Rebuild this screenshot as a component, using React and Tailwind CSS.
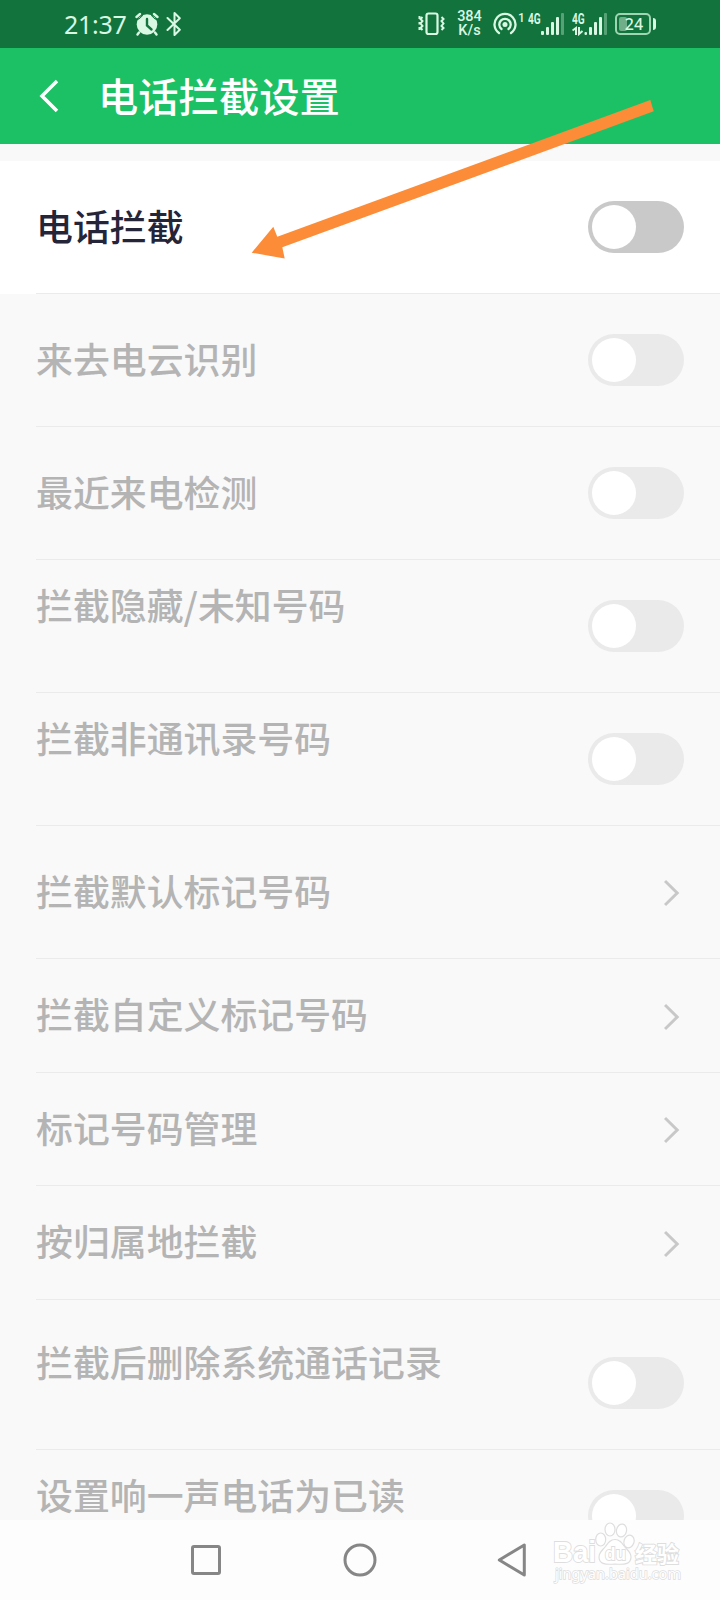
import React from 'react';

const rows = [
  { label: '电话拦截', type: 'switch', active: true, height: 'h-[133px]', align: 'items-center pb-[4px]' },
  { label: '来去电云识别', type: 'switch', height: 'h-[133px]', align: 'items-center pb-[5px]' },
  { label: '最近来电检测', type: 'switch', height: 'h-[133px]', align: 'items-center pb-[5px]' },
  { label: '拦截隐藏/未知号码', type: 'switch', height: 'h-[133px]', align: 'items-start pt-[18px]' },
  { label: '拦截非通讯录号码', type: 'switch', height: 'h-[133px]', align: 'items-start pt-[18px]' },
  { label: '拦截默认标记号码', type: 'link', height: 'h-[133px]', align: 'items-center pb-[5px]' },
  { label: '拦截自定义标记号码', type: 'link', height: 'h-[114px]', align: 'items-center pb-[5px]' },
  { label: '标记号码管理', type: 'link', height: 'h-[113px]', align: 'items-center pb-[5px]' },
  { label: '按归属地拦截', type: 'link', height: 'h-[114px]', align: 'items-center pb-[5px]' },
  { label: '拦截后删除系统通话记录', type: 'switch', height: 'h-[150px] pt-[17px]', align: 'items-start pt-[18px]' },
  { label: '设置响一声电话为已读', type: 'switch', height: 'h-[133px]', align: 'items-start pt-[18px]' },
];

function StatusBar() {
  return (
    <div className="h-12 shrink-0 bg-[#12743c] flex items-center pl-[64px] pr-[64px] text-[#d9f7e3]">
      <span className="w-[64px] font-['Noto_Sans'] text-[25px] leading-none tracking-[-0.3px] whitespace-nowrap">21:37</span>
      {/* Alarm */}
      <svg className="w-6 h-6 ml-[7px]" viewBox="0 0 24 24" fill="none">
        <circle cx="12" cy="12.5" r="10.3" fill="currentColor" />
        <path d="M1.5 5 5 2M22.5 5 19 2M4 20.5 2.5 22.5M20 20.5 21.5 22.5" stroke="currentColor" strokeWidth="2.4" strokeLinecap="round" />
        <path d="M3.5 7.5 8 3.2M20.5 7.5 16 3.2" stroke="#12743c" strokeWidth="1" />
        <path d="M12 7v6.5l4.5 4" stroke="#12743c" strokeWidth="2.4" strokeLinecap="round" />
      </svg>
      {/* Bluetooth */}
      <svg className="w-4 h-6 ml-[7px]" viewBox="0 0 16 24" fill="none" stroke="currentColor" strokeWidth="2" strokeLinejoin="round" strokeLinecap="round">
        <path d="M1.5 6 13.8 17.800 8.5 23V1l5.300 5.200L1.5 18" />
      </svg>

      <div className="ml-auto flex items-center">
        {/* Vibrate */}
        <svg className="w-[28px] h-[24px]" viewBox="0 0 28 24" fill="none" stroke="currentColor">
          <rect x="8.5" y="1.5" width="11" height="20.5" rx="2" strokeWidth="2.2" />
          <path d="M4.5 5 2.5 7 4.5 9 2.5 11.5 4.5 14 2.5 16 4.5 18M1.5 4v3M1.5 10v2.5M1.5 15v3M23.5 5l2 2-2 2 2 2.5-2 2.5 2 2-2 2" strokeWidth="2" />
        </svg>
        <div className="ml-[9px] w-[29px] text-center font-['Roboto'] font-medium text-[14.5px] leading-[14px]">
          <div>384</div>
          <div>K/s</div>
        </div>
        {/* Hotspot */}
        <svg className="ml-[8px] w-[26px] h-[24px]" viewBox="0 0 26 24" fill="none" stroke="currentColor" strokeWidth="2.3" strokeLinecap="round">
          <circle cx="13" cy="12.5" r="2.5" fill="currentColor" stroke="none" />
          <path d="M7 21a10.5 10.5 0 1 1 12 0M9.5 17a5.7 5.7 0 1 1 7 0" />
        </svg>
        <div className="flex h-[24px] w-[23px] items-start gap-[3px] font-['Roboto'] font-medium leading-none">
          <span className="text-[12px]">1</span>
          <span className="w-[12px] text-[14px] font-bold origin-left scale-x-[0.72]">4G</span>
        </div>
        <svg className="w-[24px] h-[24px]" viewBox="0 0 24 24" fill="currentColor">
          <rect x="0" y="19" width="3" height="4" rx="1" />
          <rect x="5" y="15" width="3" height="8" rx="1" />
          <rect x="10" y="10" width="3" height="13" rx="1" />
          <rect x="15" y="5" width="3" height="18" rx="1" />
          <rect x="20" y="1" width="3" height="22" rx="1" opacity=".35" />
        </svg>
        <div className="ml-[7px] w-[12px] h-[24px] flex flex-col justify-between font-['Roboto'] font-bold leading-none">
          <span className="text-[14px] origin-left scale-x-[0.72]">4G</span>
          <svg className="w-[12px] h-[10px]" viewBox="0 0 12 10" fill="none" stroke="currentColor" strokeWidth="2">
            <path d="M.5 4.5 4 2V9M7 1v7L10.5 5" />
          </svg>
        </div>
        <svg className="w-[24px] h-[24px]" viewBox="0 0 24 24" fill="currentColor">
          <rect x="0.5" y="20" width="2.5" height="3" rx="1" />
          <rect x="5" y="15" width="3" height="8" rx="1" />
          <rect x="10" y="10" width="3" height="13" rx="1" />
          <rect x="15" y="5" width="3" height="18" rx="1" />
          <rect x="20" y="1" width="3" height="22" rx="1" opacity=".35" />
        </svg>
        {/* Battery */}
        <div className="ml-[7px] flex items-center">
          <div className="relative w-[36px] h-[22px] rounded-[5px] border-2 border-[#9fd5b3] flex items-center justify-center">
            <div className="absolute left-[2px] top-[2px] w-[8px] h-[14px] rounded-[2px] bg-[#6fae88]" />
            <span className="relative pl-[2px] font-['Noto_Sans'] font-medium text-[16px] leading-none">24</span>
          </div>
          <div className="ml-[2px] w-[3px] h-[12px] rounded-r bg-[#d9f7e3]" />
        </div>
      </div>
    </div>
  );
}

function Switch({ active }) {
  return (
    <div className={`w-24 h-[52px] rounded-full p-1 shrink-0 ${active ? 'bg-[#c9c9c9]' : 'bg-[#eaeaea]'}`}>
      <div className="w-11 h-11 rounded-full bg-white" />
    </div>
  );
}

function SettingRow({ row }) {
  return (
    <div className={`shrink-0 pl-9 ${row.height} ${row.active ? 'bg-white' : ''}`}>
      <div className="h-full flex border-b border-[#ebebeb] pr-9">
        <div className={`flex-1 flex ${row.align}`}>
          <span className={`text-[36.9px] leading-[52px] font-medium whitespace-nowrap ${row.active ? 'text-[#25253a]' : 'text-[#b4b4b4]'}`}>
            {row.label}
          </span>
        </div>
        <div className="flex items-center">
          {row.type === 'switch' ? (
            <Switch active={row.active} />
          ) : (
            <svg className="w-[20px] h-[28px] mt-[2px]" viewBox="0 0 20 28" fill="none" stroke="#c8c8c8" strokeWidth="3">
              <path d="M1 2 13.2 14 1 26" />
            </svg>
          )}
        </div>
      </div>
    </div>
  );
}

function NavBar() {
  return (
    <div className="h-20 shrink-0 bg-[#fdfdfd] flex items-center pl-[190px]">
      <svg className="w-8 h-8" viewBox="0 0 32 32" fill="none" stroke="#868686" strokeWidth="3">
        <rect x="2.5" y="2.5" width="27" height="27" rx="1.5" />
      </svg>
      <svg className="w-[34px] h-[34px] ml-[121px]" viewBox="0 0 34 34" fill="none" stroke="#868686" strokeWidth="3">
        <circle cx="17" cy="17" r="15" />
      </svg>
      <svg className="w-[30px] h-[34px] ml-[120px]" viewBox="0 0 30 34" fill="none" stroke="#868686" strokeWidth="3" strokeLinejoin="round">
        <path d="M27.3 2v30L2.3 17Z" />
      </svg>
    </div>
  );
}

function Watermark() {
  return (
    <svg className="absolute left-[550px] top-[1518px] w-[134px] h-[70px]" viewBox="0 0 134 70" fill="#fff" stroke="#dedede" strokeWidth="1.2">
      <ellipse cx="50.7" cy="21.5" rx="5" ry="6.5" />
      <ellipse cx="60" cy="11.5" rx="5" ry="6.5" />
      <ellipse cx="71.5" cy="12.5" rx="5" ry="6.5" transform="rotate(12 71.5 12.5)" />
      <ellipse cx="79" cy="23.5" rx="5" ry="6.5" transform="rotate(18 79 23.5)" />
      <path d="M65 21.5c-5 0-7 3.5-9.5 7-3 4-7 6-6.5 11 .5 6 5 7.5 16 6.5 11 1 15.5-.5 16-6.5 .5-5-3.5-7-6.5-11-2.5-3.5-4.5-7-9.5-7Z" />
      <g style={{ paintOrder: 'stroke' }}>
        <text x="3" y="44" fontFamily="Liberation Sans" fontWeight="bold" fontSize="29" textLength="43" lengthAdjust="spacingAndGlyphs" strokeWidth="1.8">Bai</text>
        <text x="55" y="42" fontFamily="Liberation Sans" fontWeight="bold" fontSize="19" textLength="21" lengthAdjust="spacingAndGlyphs" strokeWidth="1.8">du</text>
        <text x="85" y="44" fontFamily="Noto Sans CJK SC" fontWeight="bold" fontSize="22" strokeWidth="1.8">经验</text>
        <text x="5" y="61" fontFamily="Noto Sans" fontSize="14" textLength="126" lengthAdjust="spacingAndGlyphs" strokeWidth="1.4">jingyan.baidu.com</text>
      </g>
    </svg>
  );
}

export default function App() {
  return (
    <div className="relative w-[720px] h-[1600px] overflow-hidden bg-[#f9f9f9] flex flex-col font-['Noto_Sans_CJK_SC',sans-serif]">
      <StatusBar />

      <header className="h-24 shrink-0 bg-[#1dc165] flex items-center pl-[38px] text-white">
        <svg className="w-[22px] h-[34px]" viewBox="0 0 22 34" fill="none" stroke="currentColor" strokeWidth="3.5">
          <path d="M19 2 4 17 19 32" />
        </svg>
        <h1 className="ml-[38px] mb-[3px] text-[40.3px] leading-[56px] font-medium">电话拦截设置</h1>
      </header>

      <main className="flex-1 min-h-0 overflow-hidden pt-[17px] flex flex-col">
        {rows.map((row) => (
          <SettingRow key={row.label} row={row} />
        ))}
      </main>

      <NavBar />
      <Watermark />

      {/* Pointer to the main switch row */}
      <svg className="absolute left-[240px] top-[90px] w-[424px] h-[180px]" viewBox="240 90 424 180">
        <path d="M251.7 252.7 273.3 226.7 277.3 236.7 650.3 100 653.7 111.3 282.3 247.3 284.7 258.5Z" fill="#fd8c39" />
      </svg>
    </div>
  );
}
